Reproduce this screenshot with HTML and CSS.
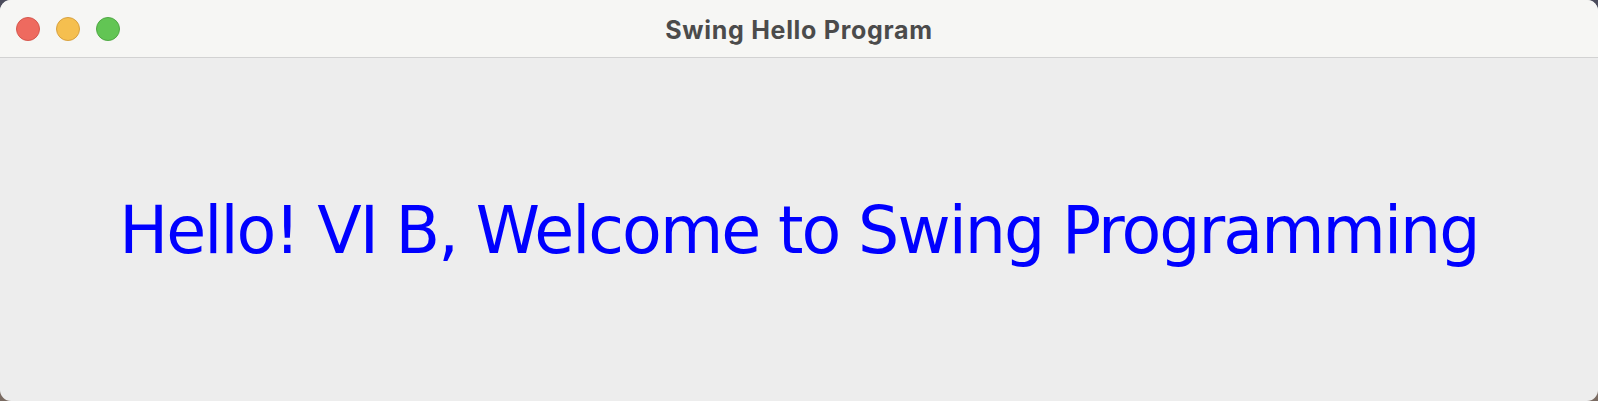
FILE: index.html
```html
<!DOCTYPE html>
<html>
<head>
<meta charset="utf-8">
<link rel="stylesheet" href="styles.css">
</head>
<body>
<div class="window">
  <div class="titlebar">
    <div class="lights">
      <span class="light red"></span>
      <span class="light yellow"></span>
      <span class="light green"></span>
    </div>
    <div class="title">Swing Hello Program</div>
  </div>
  <div class="content">
    <div class="hello">Hello! VI B, Welcome to Swing Programming</div>
  </div>
</div>
</body>
</html>
```
FILE: styles.css
```css
html, body {
  margin: 0;
  padding: 0;
  width: 1598px;
  height: 401px;
  overflow: hidden;
  background: linear-gradient(#4b4c5c, #7a6b62);
}
.window {
  width: 1598px;
  height: 401px;
  border-radius: 11px;
  overflow: hidden;
  display: flex;
  flex-direction: column;
  background: #ededed;
}
.titlebar {
  height: 57px;
  flex: none;
  background: #f6f6f4;
  border-bottom: 1px solid #d2d2d2;
  position: relative;
  display: flex;
  align-items: center;
  justify-content: center;
}
.lights {
  position: absolute;
  left: 16px;
  top: 17px;
  display: flex;
  gap: 16px;
}
.light {
  width: 24px;
  height: 24px;
  border-radius: 50%;
  box-sizing: border-box;
}
.red { background: #ee6a5f; border: 1px solid #d6574d; }
.yellow { background: #f5bf4f; border: 1px solid #d8a13f; }
.green { background: #62c554; border: 1px solid #50a844; }
.title {
  font-family: Inter, "Liberation Sans", sans-serif;
  font-weight: 700;
  font-size: 25px;
  letter-spacing: 0.7px;
  color: #4b4b4b;
  margin-top: 2px;
}
.content {
  flex: 1;
  display: flex;
  align-items: center;
  justify-content: center;
}
.hello {
  font-family: "DejaVu Sans", sans-serif;
  font-size: 65px;
  letter-spacing: -1.95px;
  color: #0000ff;
  margin-top: 2px;
}
```
